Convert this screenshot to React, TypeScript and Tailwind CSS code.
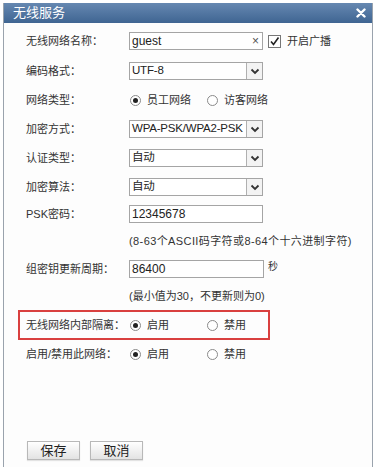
import React from "react";

const font = { fontFamily: '"Liberation Sans", "Noto Sans CJK SC", sans-serif' };

function Chevron() {
  return (
    <svg width="10" height="7" viewBox="0 0 10 7">
      <path d="M1.5 1.5 L5 5 L8.5 1.5" fill="none" stroke="#333" strokeWidth="1.8" />
    </svg>
  );
}

function Select({ value }: { value: string }) {
  return (
    <div className="flex h-[18px] w-[134px] items-stretch border border-[#a5a5a5] bg-white">
      <div className="flex flex-1 items-center overflow-hidden whitespace-nowrap pl-[2px] text-[11.5px] tracking-[-0.2px] text-[#222]">{value}</div>
      <div className="flex w-[16px] items-center justify-center border-l border-[#b0b0b0] bg-[#f3f3f3]">
        <Chevron />
      </div>
    </div>
  );
}

function Input({ value, w = 134, children }: { value: string; w?: number; children?: React.ReactNode }) {
  return (
    <div
      className="flex h-[18px] items-center border border-[#a5a5a5] bg-white pl-[2px] text-[12px] text-[#222]"
      style={{ width: w }}
    >
      <span className="flex-1">{value}</span>
      {children}
    </div>
  );
}

function Radio({ checked, label, w }: { checked?: boolean; label: string; w: string }) {
  return (
    <div className={`flex items-center ${w}`}>
      <span className="ml-[1px] flex h-[11px] w-[11px] items-center justify-center rounded-full border border-[#8a8a8a] bg-white">
        {checked && <span className="h-[5px] w-[5px] rounded-full bg-[#222]" />}
      </span>
      <span className="ml-[6px] text-[11px] text-[#333]">{label}</span>
    </div>
  );
}

function Row({ label, h, children }: { label: string; h: string; children?: React.ReactNode }) {
  return (
    <div className={`flex items-center ${h}`}>
      <div className="w-[103px] text-[11px] text-[#333]">{label}</div>
      {children}
    </div>
  );
}

export default function App() {
  return (
    <div className="h-[467px] w-[378px] overflow-hidden bg-white" style={font}>
      <div className="ml-[3px] mt-[3px] flex h-[464px] w-[370px] flex-col border-x border-[#9aa3ad] bg-[#fdfdfd]">
        <div className="flex h-[20px] items-center justify-between bg-gradient-to-b from-[#6688b1] to-[#3f6592] pl-[9px] pr-[6px]">
          <span className="text-[13px] text-white">无线服务</span>
          <svg width="10" height="10" viewBox="0 0 10 10">
            <path d="M1.5 1.5 L8.5 8.5 M8.5 1.5 L1.5 8.5" stroke="#fff" strokeWidth="2.4" strokeLinecap="round" />
          </svg>
        </div>
        <div className="flex flex-1 flex-col pl-[22px] pt-[3px]">
          <Row label="无线网络名称：" h="h-[30px]">
            <Input value="guest">
              <span className="mr-[3px] text-[12px] text-[#555]">×</span>
            </Input>
            <span className="ml-[5px] flex h-[13px] w-[13px] items-center justify-center border border-[#777] bg-white">
              <svg width="11" height="11" viewBox="0 0 11 11">
                <path d="M2 5.5 L4.5 8.5 L9.5 1.5" fill="none" stroke="#222" strokeWidth="1.6" />
              </svg>
            </span>
            <span className="ml-[6px] text-[11px] text-[#333]">开启广播</span>
          </Row>
          <Row label="编码格式：" h="h-[30px]">
            <Select value="UTF-8" />
          </Row>
          <Row label="网络类型：" h="h-[28px]">
            <Radio checked label="员工网络" w="w-[77px]" />
            <Radio label="访客网络" w="" />
          </Row>
          <Row label="加密方式：" h="h-[30px]">
            <Select value="WPA-PSK/WPA2-PSK" />
          </Row>
          <Row label="认证类型：" h="h-[28px]">
            <Select value="自动" />
          </Row>
          <Row label="加密算法：" h="h-[30px]">
            <Select value="自动" />
          </Row>
          <Row label="PSK密码：" h="h-[24px]">
            <Input value="12345678" />
          </Row>
          <Row label="" h="h-[30px]">
            <span className="text-[11px] tracking-[0.4px] text-[#333]">(8-63个ASCII码字符或8-64个十六进制字符)</span>
          </Row>
          <Row label="组密钥更新周期：" h="h-[26px]">
            <Input value="86400" w={135} />
            <span className="ml-[4px] -mt-[6px] text-[10px] text-[#333]">秒</span>
          </Row>
          <Row label="" h="h-[28px]">
            <span className="text-[11px] text-[#333]">(最小值为30，不更新则为0)</span>
          </Row>
          <div className="-ml-[8px] flex h-[30px] w-[252px] items-center border-2 border-[#d9403f] pl-[6px]">
            <div className="w-[103px] text-[11px] text-[#333]">无线网络内部隔离：</div>
            <Radio checked label="启用" w="w-[77px]" />
            <Radio label="禁用" w="" />
          </div>
          <Row label="启用/禁用此网络：" h="h-[28px]">
            <Radio checked label="启用" w="w-[77px]" />
            <Radio label="禁用" w="" />
          </Row>
          <div className="mt-[73px] flex gap-[10px] pl-[1px]">
            <button className="flex h-[19px] w-[53px] items-center justify-center border border-[#b8b8b8] bg-gradient-to-b from-[#ffffff] to-[#e3e3e3] text-[13px] text-[#222] shadow-[0_1px_1px_rgba(0,0,0,0.1)]">
              保存
            </button>
            <button className="flex h-[19px] w-[53px] items-center justify-center border border-[#b8b8b8] bg-gradient-to-b from-[#ffffff] to-[#e3e3e3] text-[13px] text-[#222] shadow-[0_1px_1px_rgba(0,0,0,0.1)]">
              取消
            </button>
          </div>
        </div>
      </div>
    </div>
  );
}
